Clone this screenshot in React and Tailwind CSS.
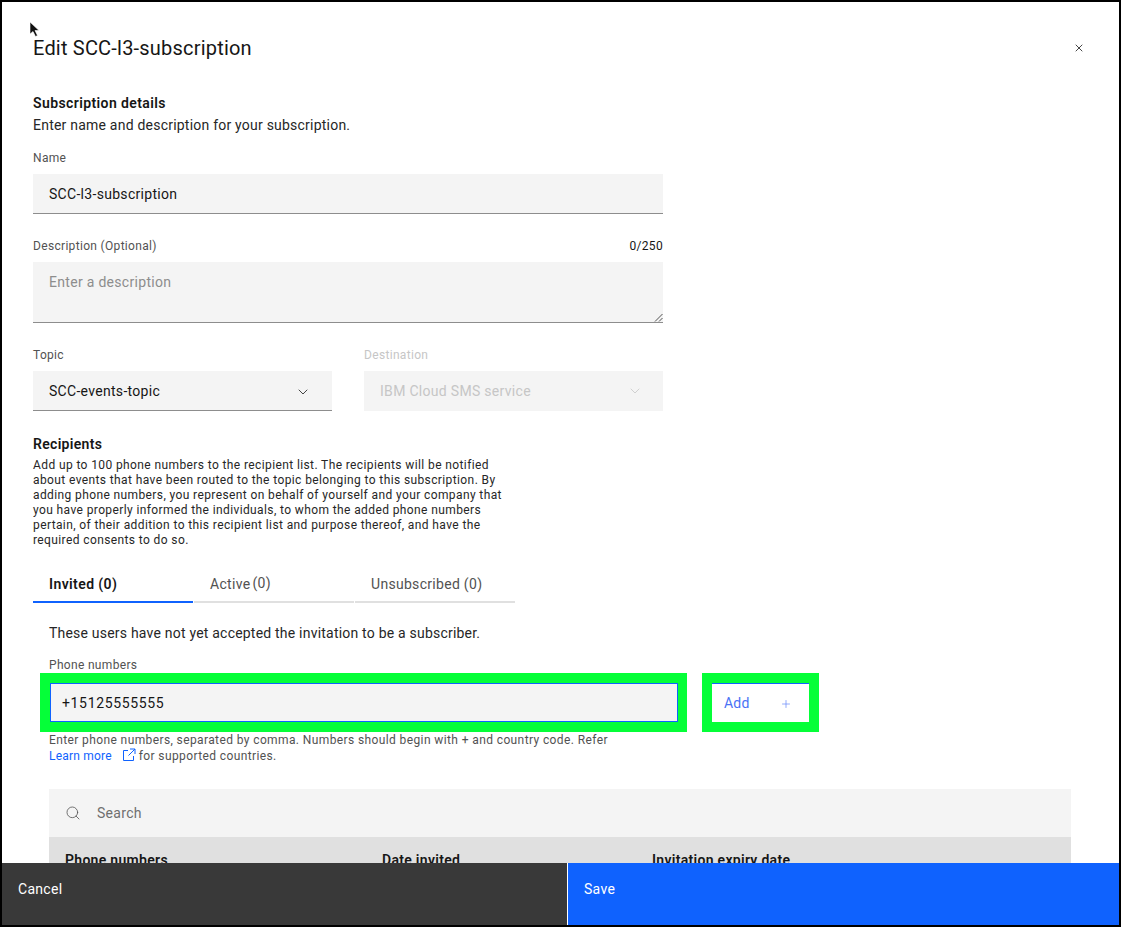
import React from 'react';
import { X, ChevronDown, Search, Plus } from 'lucide-react';

const font = "font-['Roboto','Noto_Sans',sans-serif]";

// --- small field label, 12px grey ---
const Label = ({ children, className = '' }) => (
  <div className={`text-[12px] leading-[16px] tracking-[0.32px] text-[#525252] ${className}`}>{children}</div>
);

const Tab = ({ children, active }) => (
  <div className={`w-[160px] h-[39px] pl-[16px] pt-[11px] border-b-2 text-[14px] leading-[18px] ${active ? 'border-[#0f62fe] font-semibold tracking-[0.4px] text-[#161616]' : 'border-[#e0e0e0] tracking-[0.3px] text-[#525252]'}`}>
    {children}
  </div>
);

export default function App() {
  return (
    <div className={`${font} relative w-[1121px] h-[927px] flex flex-col overflow-hidden bg-white border-2 border-black text-[#161616]`}>
      {/* mouse pointer in the screenshot */}
      <svg className="absolute left-[27px] top-[19px]" width="12" height="17" viewBox="0 0 12 17">
        <path d="M1 1 L1 13 L4 10.5 L6.5 15.5 L8.5 14.5 L6 9.5 L10 9.5 Z" fill="#111" stroke="#fff" strokeWidth="0.6" />
      </svg>

      <div className="flex-1 min-h-0 overflow-hidden pl-[31px] pr-[48px] pt-[32px]">
        <div className="flex items-center justify-between">
          <h2 className="text-[20px] leading-[28px] tracking-[0.2px] text-[#161616]">Edit SCC-l3-subscription</h2>
          <X size={12} strokeWidth={1.6} className="mr-[-14px]" />
        </div>

        <div className="mt-[32px] text-[14px] leading-[18px] font-semibold tracking-[0.4px]">Subscription details</div>
        <div className="mt-[4px] text-[14px] leading-[18px] tracking-[0.22px] text-[#262626]">Enter name and description for your subscription.</div>

        <div className="w-[630px]">
          <Label className="mt-[16px]">Name</Label>
          <div className="mt-[8px] h-[40px] bg-[#f4f4f4] border-b border-[#8d8d8d] pl-[16px] pt-[2px] flex items-center text-[14px] tracking-[0.3px]">SCC-l3-subscription</div>

          <div className="mt-[24px] flex justify-between">
            <Label>Description (Optional)</Label>
            <span className="text-[12px] leading-[16px] tracking-[0.32px] text-[#161616]">0/250</span>
          </div>
          <div className="relative mt-[8px] h-[61px] bg-[#f4f4f4] border-b border-[#8d8d8d] pl-[16px] pt-[11px] text-[14px] leading-[18px] tracking-[0.3px] text-[#8d8d8d]">
            Enter a description
            <svg className="absolute right-0 bottom-0" width="9" height="9" viewBox="0 0 9 9" stroke="#525252" fill="none">
              <path d="M1 8.5 L8.5 1 M5 8.5 L8.5 5" />
            </svg>
          </div>

          <div className="mt-[24px] flex gap-[32px]">
            <div className="w-[299px]">
              <Label>Topic</Label>
              <div className="mt-[8px] h-[40px] bg-[#f4f4f4] border-b border-[#8d8d8d] pl-[16px] pr-[21px] pt-[2px] flex items-center justify-between text-[14px] tracking-[0.3px]">
                SCC-events-topic
                <ChevronDown size={16} strokeWidth={1.2} />
              </div>
            </div>
            <div className="w-[299px]">
              <Label className="text-[#c6c6c6]">Destination</Label>
              <div className="mt-[8px] h-[40px] bg-[#f4f4f4] pl-[16px] pr-[20px] flex items-center justify-between text-[14px] tracking-[0.3px] text-[#c6c6c6]">
                IBM Cloud SMS service
                <ChevronDown size={16} strokeWidth={1.2} />
              </div>
            </div>
          </div>
        </div>

        <div className="mt-[24px] text-[14px] leading-[18px] font-semibold tracking-[0.3px]">Recipients</div>
        <p className="mt-[5px] text-[12px] leading-[15px] tracking-[0.39px] text-[#262626]">
          Add up to 100 phone numbers to the recipient list. The recipients will be notified<br />
          about events that have been routed to the topic belonging to this subscription. By<br />
          adding phone numbers, you represent on behalf of yourself and your company that<br />
          you have properly informed the individuals, to whom the added phone numbers<br />
          pertain, of their addition to this recipient list and purpose thereof, and have the<br />
          required consents to do so.
        </p>

        <div className="mt-[16px] flex gap-[1px]">
          <Tab active>Invited (0)</Tab>
          <Tab>Active<span className="relative top-[-1px] ml-[2px]">(0)</span></Tab>
          <Tab>Unsubscribed (0)</Tab>
        </div>

        <div className="pl-[16px]">
          <div className="mt-[21px] text-[14px] leading-[18px] tracking-[0.21px] text-[#262626]">These users have not yet accepted the invitation to be a subscriber.</div>
          <Label className="mt-[15px]">Phone numbers</Label>

          <div className="ml-[-9px] flex gap-[15px]">
            <div className="w-[647px] h-[59px] border-[10px] border-r-[9px] border-[#05ff38]">
              <div className="h-full bg-[#f4f4f4] border border-[#0f62fe] pl-[11px] pt-[1px] flex items-center text-[14px] tracking-[0.65px]">+15125555555</div>
            </div>
            <div className="w-[117px] h-[59px] border-[10px] border-[#05ff38]">
              <div className="h-full bg-white border-t border-[#0f62fe] pl-[12px] pr-[17px] pt-[1px] flex items-center justify-between text-[14px] tracking-[0.2px] text-[#4a72f5]">
                Add
                <Plus size={12} strokeWidth={1.5} className="text-[#6f8ffa]" />
              </div>
            </div>
          </div>

          <div className="mt-[1px] text-[12px] leading-[15px] tracking-[0.39px] text-[#525252]">
            Enter phone numbers, separated by comma. Numbers should begin with + and country code. Refer<br />
            <span className="text-[#0f62fe] tracking-[0.2px]">Learn more</span>
            <svg className="inline-block ml-[10px] mr-[3px] align-[-2px]" width="14" height="14" viewBox="0 0 14 14" fill="none" stroke="#0f62fe" strokeWidth="1">
              <path d="M6 2.5 H1.5 V12.5 H11.5 V8 M8 1 H13 V6 M13 1 L6.5 7.5" />
            </svg>
            for supported countries.
          </div>

          <div className="mt-[25px] w-[1022px]">
            <div className="h-[48px] bg-[#f4f4f4] pl-[16px] flex items-center gap-[16px] text-[14px] tracking-[0.3px] text-[#6f6f6f]">
              <Search size={16} strokeWidth={1.2} className="text-[#525252]" />
              Search
            </div>
            <div className="h-[48px] bg-[#e0e0e0] pl-[16px] pt-[14px] flex text-[14px] leading-[18px] font-semibold tracking-[0.3px]">
              <div className="w-[317px]">Phone numbers</div>
              <div className="w-[270px]">Date invited</div>
              <div>Invitation expiry date</div>
            </div>
          </div>
        </div>
      </div>

      <div className="flex h-[62px] shrink-0 text-[14px] leading-[18px] tracking-[0.3px] text-white">
        <div className="w-[565px] bg-[#393939] pl-[16px] pt-[17px]">Cancel</div>
        <div className="flex-1 bg-[#0f62fe] border-l border-white pl-[16px] pt-[17px]">Save</div>
      </div>
    </div>
  );
}
